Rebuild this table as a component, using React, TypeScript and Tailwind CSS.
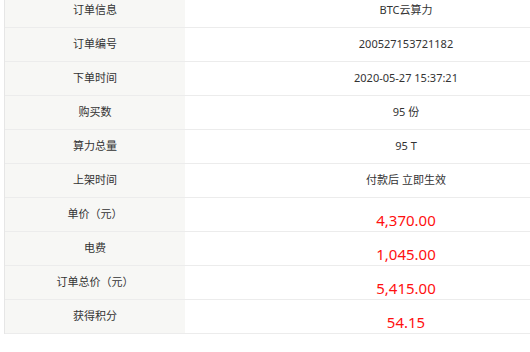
const rows: { label: string; value: string; price?: boolean }[] = [
  { label: '订单信息', value: 'BTC云算力' },
  { label: '订单编号', value: '200527153721182' },
  { label: '下单时间', value: '2020-05-27 15:37:21' },
  { label: '购买数', value: '95 份' },
  { label: '算力总量', value: '95 T' },
  { label: '上架时间', value: '付款后 立即生效' },
  { label: '单价（元）', value: '4,370.00', price: true },
  { label: '电费', value: '1,045.00', price: true },
  { label: '订单总价（元）', value: '5,415.00', price: true },
  { label: '获得积分', value: '54.15', price: true },
];

export default function App() {
  return (
    <div className="w-[530px] h-[352px] overflow-hidden bg-white font-['Noto_Sans','Noto_Sans_CJK_SC',sans-serif]">
      <div className="ml-[4px] -mt-[6px] w-[623px] border-l border-[#e6e6e6]">
        {rows.map((r) => (
          <div key={r.label} className="flex h-[34px] border-b border-[#ececec]">
            <div className="w-[180px] shrink-0 bg-[#f7f7f5] flex items-center justify-center text-[11px] text-[#333]">
              {r.label}
            </div>
            <div className="flex-1 flex items-center justify-center">
              {r.price ? (
                <span className="pt-[11px] text-[15px] leading-none text-[#ff1010]">{r.value}</span>
              ) : (
                <span className="text-[11px] text-[#333]">{r.value}</span>
              )}
            </div>
          </div>
        ))}
      </div>
    </div>
  );
}
